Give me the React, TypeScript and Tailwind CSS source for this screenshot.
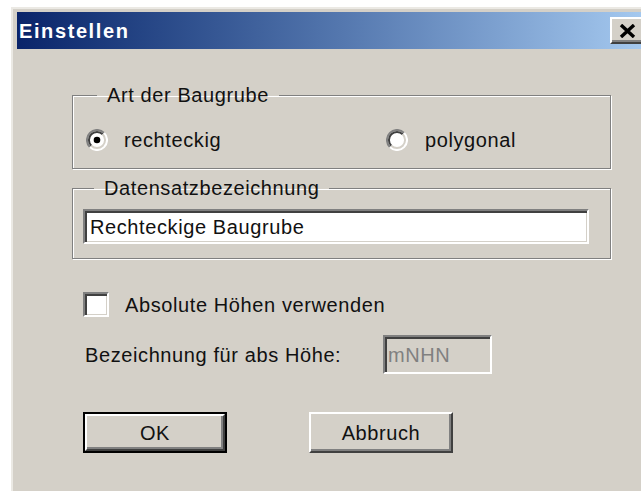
import React from "react";

const face = "bg-[#d4d0c8]";
// raised 3D edge used by buttons
const raised =
  "border-2 border-t-white border-l-white border-r-[#404040] border-b-[#404040] shadow-[inset_-2px_-2px_0_#808080]";
// sunken 3D edge used by edit fields and check boxes
const sunken =
  "border-2 border-t-[#808080] border-l-[#808080] border-r-white border-b-white shadow-[inset_2px_2px_0_#404040,inset_-1px_-1px_0_#d4d0c8]";

function Radio({ checked }: { checked?: boolean }) {
  return (
    <svg width="22" height="22" viewBox="0 0 22 22" className="shrink-0">
      <circle cx="11" cy="11" r="10" fill="#fff" />
      <path d="M3.9 18.1 A10 10 0 0 1 18.1 3.9" fill="none" stroke="#808080" strokeWidth="2" />
      <path d="M5.3 16.7 A8 8 0 0 1 16.7 5.3" fill="none" stroke="#404040" strokeWidth="2" />
      <path d="M18.1 3.9 A10 10 0 0 1 3.9 18.1" fill="none" stroke="#fff" strokeWidth="2" />
      <path d="M16.7 5.3 A8 8 0 0 1 5.3 16.7" fill="none" stroke="#d4d0c8" strokeWidth="2" />
      {checked && <circle cx="11" cy="11" r="3.3" fill="#000" />}
    </svg>
  );
}

function Group({ title, children, className }: { title: string; children: React.ReactNode; className?: string }) {
  return (
    <fieldset
      className={`border border-[#808080] shadow-[inset_1px_1px_0_#fff,1px_1px_0_#fff] ${className ?? ""}`}
    >
      <legend className="ml-[11px] px-[10px] leading-[22px]">{title}</legend>
      {children}
    </fieldset>
  );
}

export default function App() {
  return (
    <div
      className="w-[641px] h-[491px] overflow-hidden bg-white pl-[11px] pt-[7px] text-[20px] tracking-[0.6px] text-[#111]"
      style={{ fontFamily: '"Liberation Sans", Arial, sans-serif' }}
    >
      <div className={`w-[640px] h-[500px] ${face} border-l-2 border-t-2 border-[#ebe9e4] pl-[4px] pt-[3px] pr-[4px]`}>
        {/* title bar */}
        <div className="h-[37px] flex items-center pl-[2px] pr-[2px] bg-gradient-to-r from-[#0a246a] to-[#a6caf0]">
          <span className="font-bold text-white tracking-[1.6px]">Einstellen</span>
          <div className={`ml-auto w-[35px] h-[27px] ${face} ${raised} flex items-center justify-center`}>
            <svg width="17" height="14" viewBox="0 0 17 14">
              <path d="M2 1 L15 13 M15 1 L2 13" stroke="#000" strokeWidth="3.4" />
            </svg>
          </div>
        </div>

        <div className="pl-[55px] pt-[35px]">
          <Group title="Art der Baugrube" className="w-[539px] pl-[13px] pt-[22px] pb-[16px]">
            <div className="flex items-center h-[24px]">
              <label className="flex items-center gap-[16px] w-[300px]">
                <Radio checked />
                <span>rechteckig</span>
              </label>
              <label className="flex items-center gap-[17px]">
                <Radio />
                <span>polygonal</span>
              </label>
            </div>
          </Group>

          <Group title="Datensatzbezeichnung" className="mt-[8px] w-[539px] pl-[10px] pr-[21px] pt-[10px] pb-[14px]">
            <div className={`h-[35px] bg-white ${sunken} flex items-center pl-[5px]`}>
              Rechteckige Baugrube
            </div>
          </Group>

          <div className="ml-[11px] mt-[33px] flex items-center gap-[16px] h-[25px]">
            <div className={`w-[26px] h-[25px] bg-white ${sunken}`} />
            <span>Absolute Höhen verwenden</span>
          </div>

          <div className="ml-[13px] mt-[18px] flex items-center h-[39px]">
            <span className="w-[298px]">Bezeichnung für abs Höhe:</span>
            <div className={`w-[109px] h-[39px] ${face} ${sunken} flex items-center pl-[3px] text-[#808080]`}>
              mNHN
            </div>
          </div>

          <div className="ml-[11px] mt-[38px] flex gap-[82px]">
            <button className={`w-[144px] h-[41px] border-2 border-black ${face}`}>
              <div className={`h-full ${raised} flex items-center justify-center`}>OK</div>
            </button>
            <button className={`w-[144px] h-[41px] ${face} ${raised} flex items-center justify-center`}>
              Abbruch
            </button>
          </div>
        </div>
      </div>
    </div>
  );
}
